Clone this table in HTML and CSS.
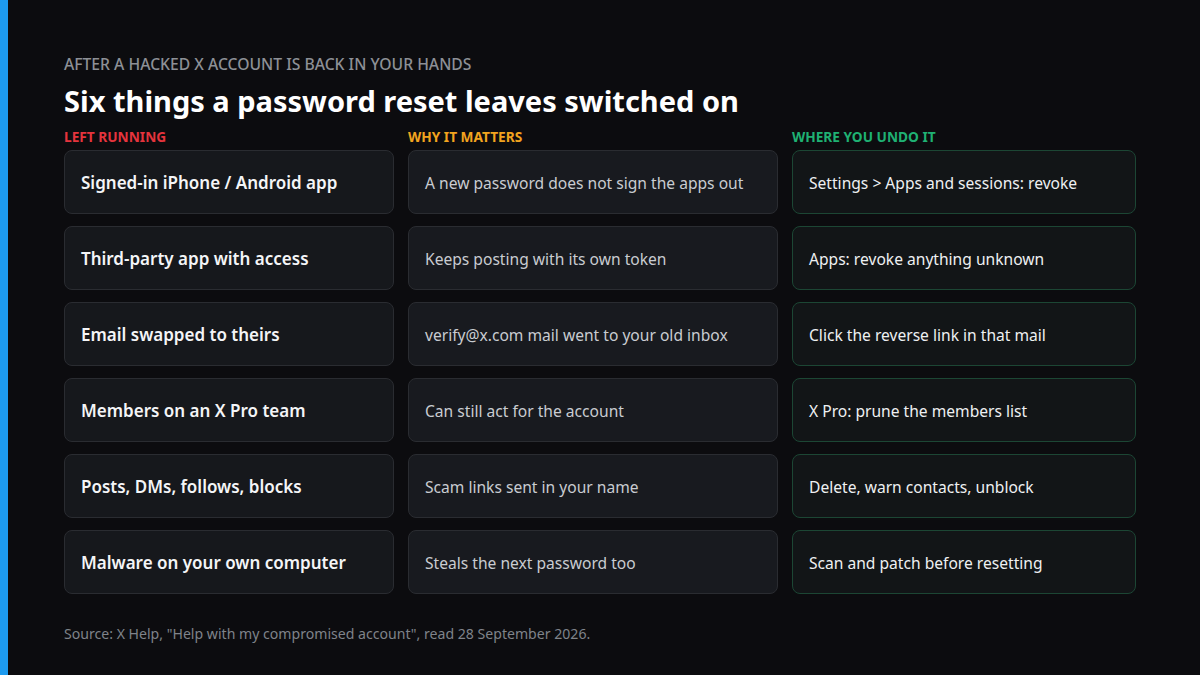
FILE: index.html
```html
<!DOCTYPE html>
<html lang="en">
<head>
<meta charset="utf-8">
<title>Six things a password reset leaves switched on</title>
<link rel="stylesheet" href="styles.css">
</head>
<body>
<div class="page">
  <div class="accent"></div>
  <main class="content">
    <p class="kicker">AFTER A HACKED X ACCOUNT IS BACK IN YOUR HANDS</p>
    <h1 class="title">Six things a password reset leaves switched on</h1>
    <div class="heads">
      <div class="head head-red">LEFT RUNNING</div>
      <div class="head head-amber">WHY IT MATTERS</div>
      <div class="head head-green">WHERE YOU UNDO IT</div>
    </div>
    <div class="grid">
      <div class="card card-item">Signed-in iPhone / Android app</div>
      <div class="card card-why">A new password does not sign the apps out</div>
      <div class="card card-fix">Settings &gt; Apps and sessions: revoke</div>

      <div class="card card-item">Third-party app with access</div>
      <div class="card card-why">Keeps posting with its own token</div>
      <div class="card card-fix">Apps: revoke anything unknown</div>

      <div class="card card-item">Email swapped to theirs</div>
      <div class="card card-why">verify@x.com mail went to your old inbox</div>
      <div class="card card-fix">Click the reverse link in that mail</div>

      <div class="card card-item">Members on an X Pro team</div>
      <div class="card card-why">Can still act for the account</div>
      <div class="card card-fix">X Pro: prune the members list</div>

      <div class="card card-item">Posts, DMs, follows, blocks</div>
      <div class="card card-why">Scam links sent in your name</div>
      <div class="card card-fix">Delete, warn contacts, unblock</div>

      <div class="card card-item">Malware on your own computer</div>
      <div class="card card-why">Steals the next password too</div>
      <div class="card card-fix">Scan and patch before resetting</div>
    </div>
    <p class="source">Source: X Help, "Help with my compromised account", read 28 September 2026.</p>
  </main>
</div>
</body>
</html>
```
FILE: styles.css
```css
* { box-sizing: border-box; }
html, body {
  margin: 0;
  padding: 0;
  background: #0c0c0f;
}
body {
  font-family: "Noto Sans", "Open Sans", sans-serif;
  color: #f2f3f5;
}
.page {
  display: flex;
  width: 1200px;
  height: 675px;
  overflow: hidden;
}
.accent {
  width: 8px;
  flex: 0 0 8px;
  background: #1d9bf0;
}
.content {
  padding: 53px 0 0 56px;
}
.kicker {
  margin: 0;
  font-size: 15.7px;
  line-height: 22px;
  font-weight: 500;
  color: #8d9096;
}
.title {
  margin: 6px 0 0;
  font-size: 29px;
  line-height: 40px;
  font-weight: 700;
  color: #ffffff;
}
.heads,
.grid {
  display: grid;
  grid-template-columns: 330px 370px 344px;
  column-gap: 14px;
}
.heads {
  margin-top: 6px;
}
.head {
  font-size: 13.7px;
  line-height: 20px;
  font-weight: 700;
}
.head-red { color: #e5343d; }
.head-amber { color: #f2a41f; }
.head-green { color: #1fb173; }
.grid {
  margin-top: 3px;
  row-gap: 12px;
  grid-auto-rows: 64px;
}
.card {
  display: flex;
  align-items: center;
  padding: 1px 16px 0;
  border-radius: 8px;
  border: 1px solid #2a2c31;
  background: #16181c;
  font-size: 15.6px;
}
.card-item {
  font-size: 17px;
  font-weight: 600;
  color: #f4f5f7;
}
.card-why {
  color: #c9ccd1;
  background: #181a1f;
}
.card-fix {
  color: #eef0f2;
  background: #121517;
  border-color: #1c4634;
}
.source {
  margin: 30px 0 0;
  font-size: 14.1px;
  line-height: 20px;
  color: #7f838a;
}
```
